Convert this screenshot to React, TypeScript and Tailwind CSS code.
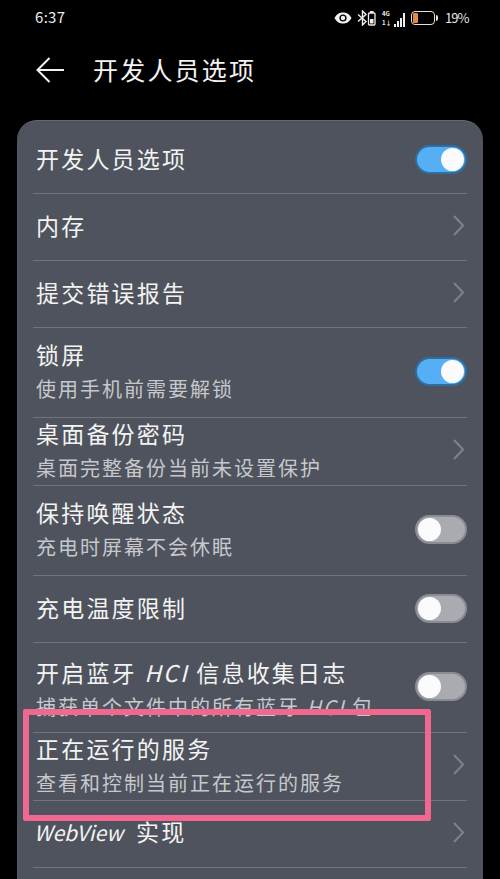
interface RowData {
  title: React.ReactNode;
  sub?: React.ReactNode;
  height: string;
  toggle?: boolean;
  clipSub?: boolean;
}

const rows: RowData[] = [
  { title: "开发人员选项", height: "h-[73px] pt-[7px]", toggle: true },
  { title: "内存", height: "h-[67px]" },
  { title: "提交错误报告", height: "h-[67px]" },
  { title: "锁屏", sub: "使用手机前需要解锁", height: "h-[90px]", toggle: true },
  { title: "桌面备份密码", sub: "桌面完整备份当前未设置保护", height: "h-[68px]" },
  { title: "保持唤醒状态", sub: "充电时屏幕不会休眠", height: "h-[90px]", toggle: false },
  { title: "充电温度限制", height: "h-[67px]", toggle: false },
  {
    title: (
      <>
        开启蓝牙 <span className="italic">HCI</span> 信息收集日志
      </>
    ),
    sub: (
      <>
        捕获单个文件中的所有蓝牙 <span className="italic">HCI</span> 包
      </>
    ),
    height: "h-[90px]",
    toggle: false,
    clipSub: true,
  },
  { title: "正在运行的服务", sub: "查看和控制当前正在运行的服务", height: "h-[68px]" },
  {
    title: (
      <span className="-ml-[2px] inline-block">
        <span className="text-[21px] tracking-[0px] italic">WebView</span>
        <span className="ml-[13px]">实现</span>
      </span>
    ),
    height: "h-[67px]",
  },
];

function Toggle({ on }: { on: boolean }) {
  return (
    <div
      className={
        on
          ? "mb-[2px] flex h-[29px] w-[52px] shrink-0 items-center justify-end rounded-full border-2 border-[#2f6f9f] bg-[#56aef4] pr-[1px]"
          : "mb-[2px] flex h-[29px] w-[52px] shrink-0 items-center justify-start rounded-full border-2 border-[#8a8c93] bg-[#a9abb1] pl-[1px]"
      }
    >
      <div className="h-[23px] w-[23px] rounded-full bg-[#fbfbfd]" />
    </div>
  );
}

function Chevron() {
  return (
    <svg width="11" height="21" viewBox="0 0 11 21" className="mr-[3px] mb-[4px] shrink-0">
      <path d="M1 1L10 10.5L1 20" fill="none" stroke="#7e8189" strokeWidth="2" />
    </svg>
  );
}

function StatusIcons() {
  return (
    <div className="flex items-center pr-[33px]">
      {/* eye */}
      <svg width="18" height="12" viewBox="0 0 18 12" className="mr-[5px]">
        <path d="M0.5 6C3 1.6 6 0.5 9 0.5S15 1.6 17.5 6C15 10.4 12 11.5 9 11.5S3 10.4 0.5 6Z" fill="#f2f2f2" />
        <circle cx="9" cy="6" r="3.6" fill="#000" />
        <circle cx="9" cy="6" r="2.2" fill="#f2f2f2" />
      </svg>
      {/* bluetooth + small battery */}
      <svg width="19" height="16" viewBox="0 0 19 16" className="mr-[6px]">
        <path d="M1 4.5L9 11.5L5.5 15V1L9 4.5L1 11.5" fill="none" stroke="#eee" strokeWidth="1.4" />
        <rect x="11.5" y="3" width="6.5" height="12" rx="1" fill="none" stroke="#eee" strokeWidth="1.3" />
        <rect x="13" y="1" width="3.5" height="2" fill="#eee" />
        <rect x="13" y="9" width="3.5" height="4.5" fill="#eee" />
      </svg>
      {/* 4G + signal bars */}
      <div className="mr-[6px] flex items-end gap-[1px]">
        <div className="mr-[1px] w-[10px] text-[6px] leading-[9px] font-bold whitespace-nowrap text-[#eee]">
          4G
          <br />
          1↓
        </div>
        <div className="h-[3px] w-[2px] bg-[#eee]" />
        <div className="h-[6px] w-[2px] bg-[#eee]" />
        <div className="h-[9px] w-[2px] bg-[#eee]" />
        <div className="h-[14px] w-[2px] bg-[#eee]" />
      </div>
      {/* battery */}
      <div className="mr-[7px] flex items-center">
        <div className="flex h-[14px] w-[24px] items-center rounded-[4px] border-[1.5px] border-[#e8dfd8] p-[1px]">
          <div className="h-full w-[5px] rounded-[1px] bg-[#e58a45]" />
        </div>
        <div className="ml-[1px] h-[6px] w-[2px] rounded-r-sm bg-[#e8dfd8]" />
      </div>
      <span className="w-[22px] text-[13px] leading-none tracking-[-1px] whitespace-nowrap text-[#e6e6e6]">19%</span>
    </div>
  );
}

export default function App() {
  return (
    <div className="relative h-[879px] w-[500px] overflow-hidden bg-black font-['Noto_Sans_CJK_SC','Noto_Sans',sans-serif]">
      <div className="flex h-[35px] items-center justify-between pl-[35px]">
        <span className="text-[15px] tracking-[0.3px] text-[#ececec]">6:37</span>
        <StatusIcons />
      </div>

      <div className="flex h-[69px] items-center pl-[36px]">
        <svg width="28" height="26" viewBox="0 0 28 26">
          <path d="M1.5 13H28M13.5 1L1.5 13L13.5 25" fill="none" stroke="#f2f2f2" strokeWidth="2" />
        </svg>
        <span className="ml-[29px] text-[25px] tracking-[2.2px] text-[#f2f2f2]">开发人员选项</span>
      </div>

      <div className="mx-[17px] mt-4 h-[780px] rounded-t-[20px] border-t border-[#64676e] bg-[#4f535d] px-4">
        {rows.map((row, i) => (
          <div
            key={i}
            className={`flex items-center justify-between border-b border-[#71747b] ${row.height}`}
          >
            <div className={row.sub ? "min-w-0 pb-[3px] pl-[3px]" : "min-w-0 pb-[5px] pl-[3px]"}>
              <div className="text-[23px] leading-[34px] tracking-[2.2px] whitespace-nowrap text-[#f3f3f3]">
                {row.title}
              </div>
              {row.sub && (
                <div
                  className={
                    row.clipSub
                      ? "mt-[1px] h-[27px] overflow-hidden text-[20px] leading-[34px] tracking-[2px] whitespace-nowrap text-[#c6c8cc]"
                      : "mt-[1px] text-[20px] leading-[34px] tracking-[2px] whitespace-nowrap text-[#c6c8cc]"
                  }
                >
                  {row.sub}
                </div>
              )}
            </div>
            {row.toggle === undefined ? <Chevron /> : <Toggle on={row.toggle} />}
          </div>
        ))}
      </div>

      {/* annotation box drawn over the screenshot */}
      <div className="absolute top-[709px] left-[23px] h-[112px] w-[408px] rounded-[2px] border-[6px] border-[#f0688f]" />
    </div>
  );
}
